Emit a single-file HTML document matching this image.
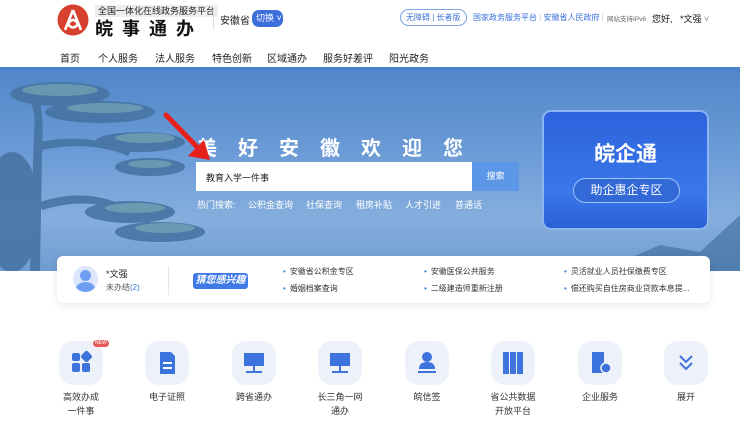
<!DOCTYPE html>
<html><head><meta charset="utf-8"><style>
*{margin:0;padding:0;box-sizing:border-box}
body{width:740px;height:423px;overflow:hidden;background:#fff;font-family:"Liberation Sans","Noto Sans CJK SC",sans-serif;position:relative;color:#222}
.a{position:absolute;white-space:nowrap}
.nav span{position:absolute;top:50px;font-size:10px;color:#222}
.hot{font-size:9px;color:#fff;top:198px}
.lk{font-size:8px;color:#333}
.lk:before{content:"•";color:#3a78e0;margin-right:4px}
.tile{position:absolute;top:341px;width:44px;height:44px;border-radius:14px;background:#edf1f9}
.lbl{position:absolute;top:390px;width:80px;text-align:center;font-size:9px;line-height:14px;color:#333}
</style></head><body>
<!-- header -->
<svg class="a" style="left:57px;top:4px" width="32" height="32" viewBox="0 0 32 32"><circle cx="16" cy="16" r="15.5" fill="#d8402e"/><path d="M16 6 L8 26 M16 6 L24 26 M11 20 Q16 12 21 20 Q16 27 11 20" stroke="#fff" stroke-width="2.6" fill="none"/></svg>
<div class="a" style="left:95px;top:5px;font-size:9px;background:#eee;padding:0 3px;line-height:12px;color:#222">全国一体化在线政务服务平台</div>
<div class="a" style="left:95px;top:15px;font-size:18px;font-weight:bold;letter-spacing:9px;color:#111">皖事通办</div>
<div class="a" style="left:213px;top:9px;width:1px;height:20px;background:#ddd"></div>
<div class="a" style="left:220px;top:12px;font-size:10px">安徽省</div>
<div class="a" style="left:252px;top:10px;width:31px;height:17px;border-radius:7px;background:#3d6fdc;color:#fff;font-size:9px;line-height:17px;padding-left:4px">切换 ˅</div>
<div class="a" style="left:400px;top:9px;width:67px;height:17px;border:1px solid #7aa3ea;border-radius:9px;font-size:8px;line-height:15px;color:#3a6fd8;padding-left:5px">无障碍 | 长者版</div>
<div class="a" style="left:473px;top:12px;font-size:8px;color:#3a6fd8">国家政务服务平台 <span style="color:#ccc">|</span> 安徽省人民政府 <span style="color:#ccc">|</span></div>
<div class="a" style="left:607px;top:13px;font-size:6.5px;color:#666">网站支持IPv6</div>
<div class="a" style="left:652px;top:12px;font-size:9px;color:#111">您好,&nbsp;&nbsp;&nbsp;*文强 <span style="color:#888">˅</span></div>
<div class="nav"><span style="left:60px">首页</span><span style="left:98px">个人服务</span><span style="left:155px">法人服务</span><span style="left:212px">特色创新</span><span style="left:267px">区域通办</span><span style="left:323px">服务好差评</span><span style="left:389px">阳光政务</span></div>
<!-- banner -->
<div class="a" style="left:0;top:67px;width:740px;height:204px;background:linear-gradient(180deg,#4f86c9 0%,#6a9ad6 40%,#86aedd 75%,#6f9bd0 100%)"></div>
<div class="a" style="left:0;top:67px;width:740px;height:3px;background:#4a82cc"></div>
<svg class="a" style="left:0;top:72px" width="210" height="199">
<g fill="#4674a3" opacity=".9">
<path d="M30 199 L34 60 Q36 40 30 30 L40 30 Q44 50 42 80 L40 199Z"/>
<path d="M40 70 Q90 60 130 80 L128 84 Q90 68 42 78Z"/>
<path d="M40 130 Q100 110 150 150 L146 152 Q100 120 42 138Z"/>
<ellipse cx="60" cy="22" rx="50" ry="12"/><ellipse cx="100" cy="40" rx="55" ry="11"/>
<ellipse cx="140" cy="70" rx="45" ry="10"/><ellipse cx="150" cy="95" rx="35" ry="9"/>
<ellipse cx="130" cy="140" rx="45" ry="11"/><ellipse cx="160" cy="160" rx="45" ry="10"/>
<ellipse cx="12" cy="140" rx="28" ry="60"/>
</g>
<g fill="#84b4b9" opacity=".55">
<ellipse cx="60" cy="18" rx="38" ry="6"/><ellipse cx="105" cy="36" rx="38" ry="5"/><ellipse cx="145" cy="66" rx="30" ry="5"/><ellipse cx="150" cy="92" rx="22" ry="4"/><ellipse cx="135" cy="136" rx="30" ry="5"/><ellipse cx="165" cy="156" rx="30" ry="5"/>
</g></svg>
<svg class="a" style="left:600px;top:200px" width="140" height="71"><path d="M0 71 L60 45 L100 52 L140 15 L140 71Z" fill="#3b6a98" opacity=".6"/></svg>
<div class="a" style="left:197px;top:132px;font-size:20px;font-weight:bold;color:#fff;letter-spacing:21px">美好安徽欢迎您</div>
<div class="a" style="left:196px;top:162px;width:277px;height:29px;background:#fff"></div>
<div class="a" style="left:206px;top:171px;font-size:9px;color:#222">教育入学一件事</div>
<div class="a" style="left:472px;top:162px;width:47px;height:29px;background:#5c96e6;color:#fff;font-size:9px;line-height:29px;text-align:center">搜索</div>
<div class="a hot" style="left:197px">热门搜索:</div><div class="a hot" style="left:248px">公积金查询</div><div class="a hot" style="left:306px">社保查询</div><div class="a hot" style="left:356px">租房补贴</div><div class="a hot" style="left:405px">人才引进</div><div class="a hot" style="left:455px">普通话</div>
<svg class="a" style="left:160px;top:110px" width="60" height="56"><path d="M6 5 L40 40" stroke="#e8201c" stroke-width="5" stroke-linecap="round"/><path d="M50 50 L28 46 L44 30Z" fill="#e8201c"/></svg>
<div class="a" style="left:542px;top:110px;width:167px;height:120px;border-radius:9px;border:2px solid #8bb6f2;background:linear-gradient(180deg,#2c62dc,#3a78ea 70%,#2b5fd6)"></div>
<div class="a" style="left:542px;top:138px;width:167px;text-align:center;font-size:21px;font-weight:bold;color:#fff">皖企通</div>
<div class="a" style="left:573px;top:178px;width:107px;height:25px;border-radius:13px;border:1.5px solid #9cc2ff;background:#3269d6;color:#fff;font-size:12px;line-height:22px;text-align:center">助企惠企专区</div>
<!-- info card -->
<div class="a" style="left:57px;top:256px;width:653px;height:47px;background:#fff;border-radius:6px;box-shadow:0 2px 8px rgba(0,0,0,.1)"></div>
<div class="a" style="left:73px;top:266px;width:25px;height:26px;border-radius:50%;background:#dbe6fb;overflow:hidden"><div style="position:absolute;left:7px;top:4px;width:11px;height:11px;border-radius:50%;background:#6f9ef0"></div><div style="position:absolute;left:3px;top:16px;width:19px;height:14px;border-radius:50%;background:#6f9ef0"></div></div>
<div class="a" style="left:106px;top:267px;font-size:9px;color:#222">*文强</div>
<div class="a" style="left:106px;top:282px;font-size:8px;color:#555">未办结<span style="color:#3a78e0">(2)</span></div>
<div class="a" style="left:168px;top:266px;width:1px;height:29px;background:#e6e6e6"></div>
<div class="a" style="left:193px;top:273px;width:55px;height:16px;background:#3f7ae6;border-radius:3px;color:#fff;font-size:10px;font-weight:bold;font-style:italic;line-height:16px;text-align:center">猜您感兴趣</div>
<div class="a lk" style="left:283px;top:266px">安徽省公积金专区</div>
<div class="a lk" style="left:283px;top:283px">婚姻档案查询</div>
<div class="a lk" style="left:424px;top:266px">安徽医保公共服务</div>
<div class="a lk" style="left:424px;top:283px">二级建造师重新注册</div>
<div class="a lk" style="left:564px;top:266px">灵活就业人员社保缴费专区</div>
<div class="a lk" style="left:564px;top:283px">偿还购买自住房商业贷款本息提...</div>
<!-- icons -->
<div class="tile" style="left:59px"></div><div class="tile" style="left:145px"></div><div class="tile" style="left:232px"></div><div class="tile" style="left:318px"></div><div class="tile" style="left:405px"></div><div class="tile" style="left:491px"></div><div class="tile" style="left:578px"></div><div class="tile" style="left:664px"></div>
<div class="a" style="left:93px;top:340px;background:#e85a5a;color:#fff;font-size:5px;border-radius:4px;padding:0 2px;line-height:7px">NEW</div>
<svg class="a" style="left:59px;top:341px" width="44" height="44"><g fill="#3d73dc"><rect x="13" y="12" width="8" height="8" rx="2"/><rect x="23" y="11" width="9" height="9" rx="2" transform="rotate(45 27.5 15.5)"/><rect x="13" y="22" width="8" height="9" rx="2"/><rect x="23" y="22" width="8" height="9" rx="2"/></g></svg>
<svg class="a" style="left:145px;top:341px" width="44" height="44"><path d="M15 11 H26 L30 15 V33 H15Z" fill="#3d73dc"/><rect x="18" y="21" width="9" height="2" fill="#fff"/><rect x="18" y="26" width="9" height="2" fill="#fff"/></svg>
<svg class="a" style="left:232px;top:341px" width="44" height="44"><rect x="12" y="12" width="20" height="13" fill="#3d73dc"/><rect x="21" y="25" width="2" height="5" fill="#3d73dc"/><rect x="14" y="30" width="16" height="2" fill="#3d73dc"/></svg>
<svg class="a" style="left:318px;top:341px" width="44" height="44"><rect x="12" y="12" width="20" height="13" fill="#3d73dc"/><rect x="21" y="25" width="2" height="5" fill="#3d73dc"/><rect x="14" y="30" width="16" height="2" fill="#3d73dc"/></svg>
<svg class="a" style="left:405px;top:341px" width="44" height="44"><circle cx="22" cy="16" r="5" fill="#3d73dc"/><path d="M14 28 Q14 21 22 21 Q30 21 30 28Z" fill="#3d73dc"/><rect x="13" y="30" width="18" height="2" fill="#3d73dc"/></svg>
<svg class="a" style="left:491px;top:341px" width="44" height="44"><rect x="12" y="11" width="6" height="22" fill="#3d73dc"/><rect x="19" y="11" width="6" height="22" fill="#3d73dc"/><rect x="26" y="11" width="6" height="22" fill="#3d73dc"/></svg>
<svg class="a" style="left:578px;top:341px" width="44" height="44"><rect x="14" y="11" width="12" height="21" fill="#3d73dc"/><circle cx="28" cy="27" r="5" fill="#3d73dc" stroke="#edf1f9" stroke-width="1.5"/></svg>
<svg class="a" style="left:664px;top:341px" width="44" height="44"><path d="M16 15 L22 21 L28 15 M16 22 L22 28 L28 22" stroke="#3d73dc" stroke-width="2" fill="none"/></svg>
<div class="lbl" style="left:41px">高效办成<br>一件事</div>
<div class="lbl" style="left:127px">电子证照</div>
<div class="lbl" style="left:214px">跨省通办</div>
<div class="lbl" style="left:300px">长三角一网<br>通办</div>
<div class="lbl" style="left:387px">皖信签</div>
<div class="lbl" style="left:473px">省公共数据<br>开放平台</div>
<div class="lbl" style="left:560px">企业服务</div>
<div class="lbl" style="left:646px">展开</div>
</body></html>
